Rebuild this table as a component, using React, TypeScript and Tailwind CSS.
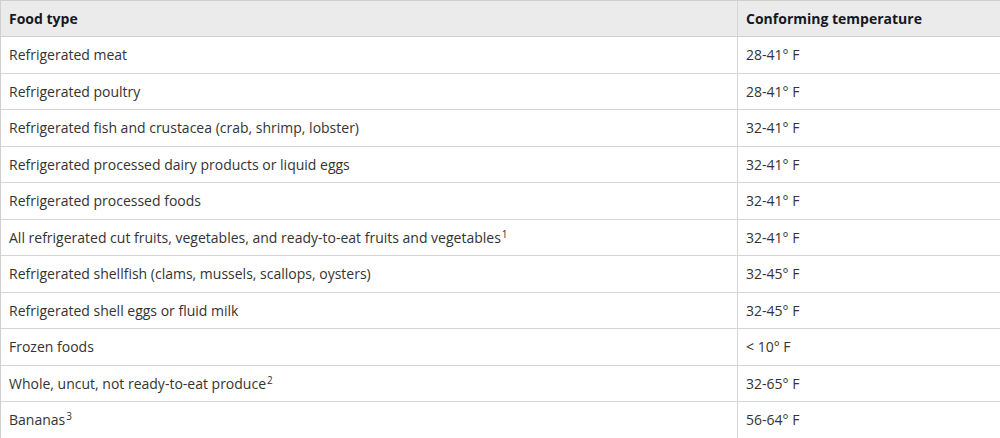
const rows: [string, string | null, string][] = [
  ["Refrigerated meat", null, "28-41° F"],
  ["Refrigerated poultry", null, "28-41° F"],
  ["Refrigerated fish and crustacea (crab, shrimp, lobster)", null, "32-41° F"],
  ["Refrigerated processed dairy products or liquid eggs", null, "32-41° F"],
  ["Refrigerated processed foods", null, "32-41° F"],
  ["All refrigerated cut fruits, vegetables, and ready-to-eat fruits and vegetables", "1", "32-41° F"],
  ["Refrigerated shellfish (clams, mussels, scallops, oysters)", null, "32-45° F"],
  ["Refrigerated shell eggs or fluid milk", null, "32-45° F"],
  ["Frozen foods", null, "< 10° F"],
  ["Whole, uncut, not ready-to-eat produce", "2", "32-65° F"],
  ["Bananas", "3", "56-64° F"],
];

export default function App() {
  return (
    <div
      className="w-[1000px] h-[438px] overflow-hidden bg-white text-[14px] text-[#333]"
      style={{ fontFamily: '"Open Sans", "Noto Sans", sans-serif' }}
    >
      <div className="w-[1010px] border-l border-t border-[#cfcfcf]">
        {/* header */}
        <div className="flex h-[36px] bg-[#ebebeb] border-b border-[#cfcfcf] font-bold text-[#16191f]">
          <div className="w-[737px] flex items-center pl-[8px] border-r border-[#d6d6d6]">
            Food type
          </div>
          <div className="flex-1 flex items-center pl-[8px]">Conforming temperature</div>
        </div>

        {rows.map(([food, sup, temp], i) => (
          <div key={i} className="flex h-[36.5px] border-b border-[#d4d4d4]">
            <div className="w-[737px] flex items-center pl-[8px] border-r border-[#d6d6d6]">
              <span>
                {food}
                {sup && <sup className="text-[10px] ml-[1px]">{sup}</sup>}
              </span>
            </div>
            <div className="flex-1 flex items-center pl-[8px]">{temp}</div>
          </div>
        ))}
      </div>
    </div>
  );
}
